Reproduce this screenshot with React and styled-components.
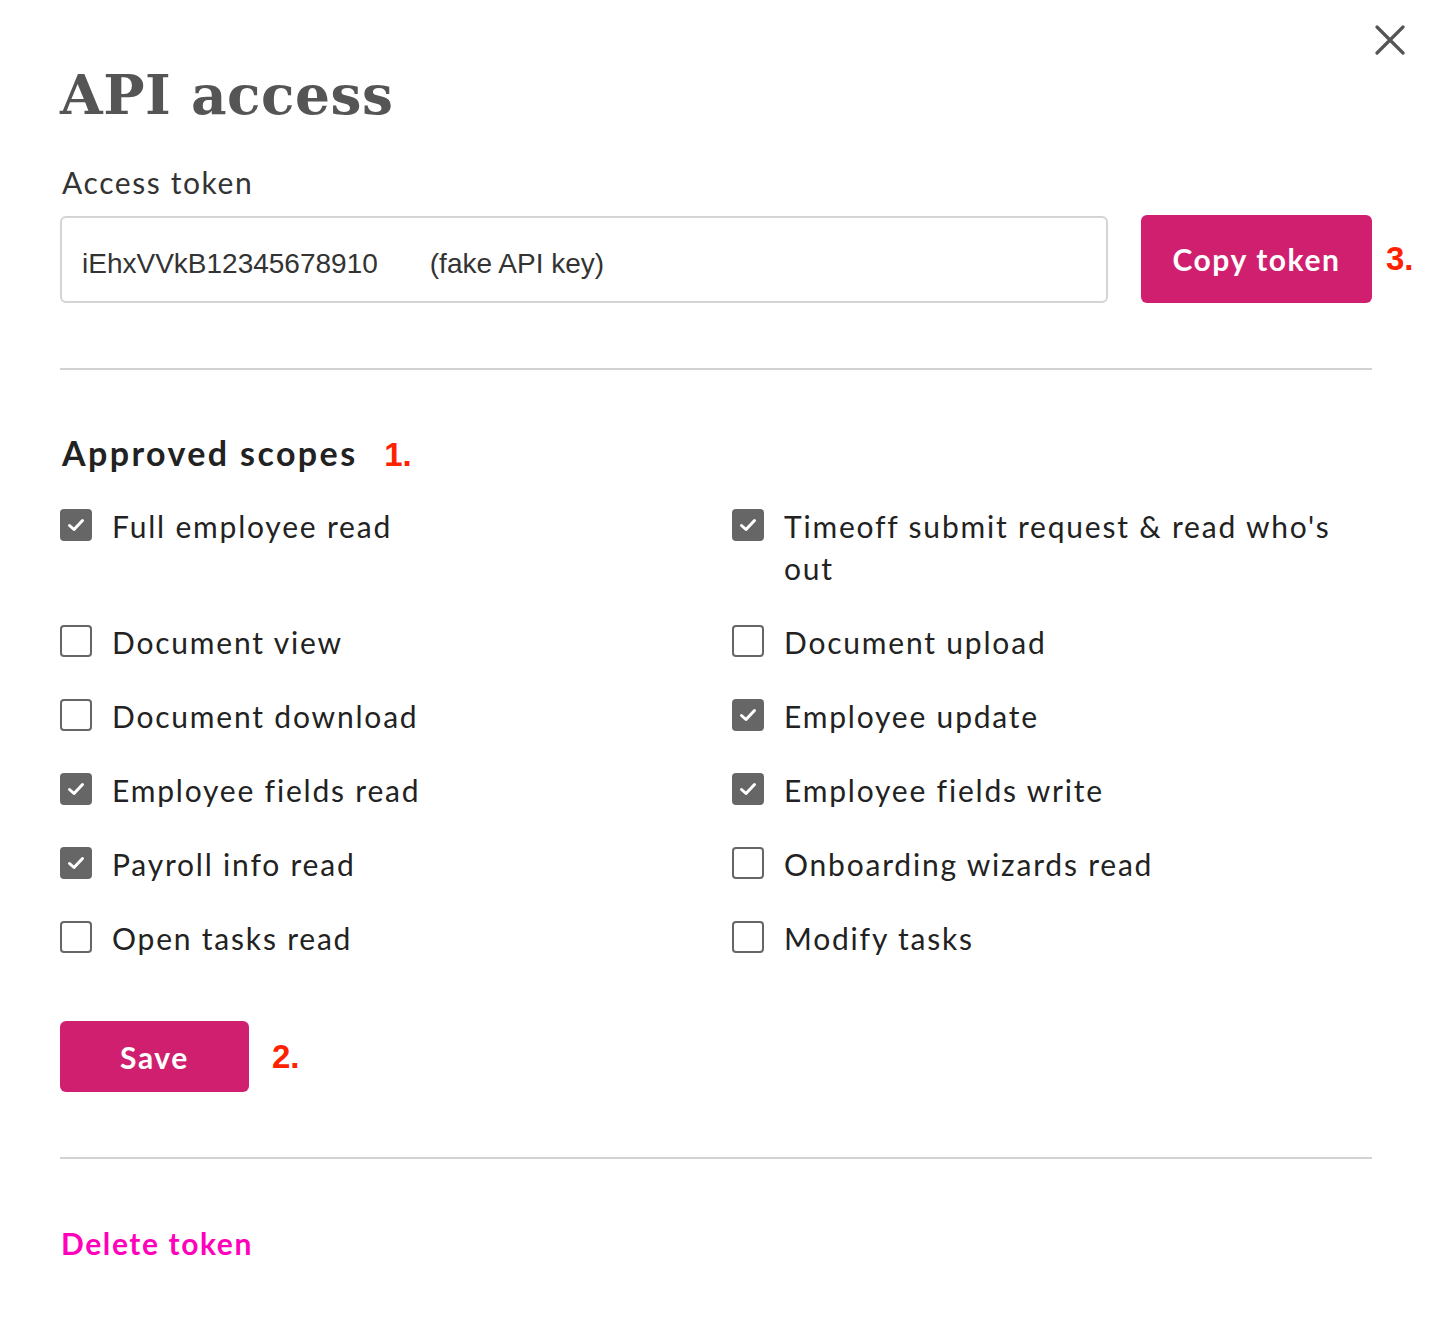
import React, { useState } from "react";
import styled, { createGlobalStyle } from "styled-components";

const GlobalStyle = createGlobalStyle`
  html, body {
    margin: 0;
    padding: 0;
    background: #ffffff;
  }
  body {
    font-family: Lato, "Open Sans", sans-serif;
    color: #222;
  }
`;

const scopes = [
  ["Full employee read", true],
  ["Timeoff submit request & read who's out", true],
  ["Document view", false],
  ["Document upload", false],
  ["Document download", false],
  ["Employee update", true],
  ["Employee fields read", true],
  ["Employee fields write", true],
  ["Payroll info read", true],
  ["Onboarding wizards read", false],
  ["Open tasks read", false],
  ["Modify tasks", false],
];

const App = () => {
  const [checked, setChecked] = useState(scopes.map((s) => s[1]));

  const toggle = (i) => {
    const next = [...checked];
    next[i] = !next[i];
    setChecked(next);
  };

  return (
    <>
      <GlobalStyle />
      <Modal>
        <CloseButton aria-label="Close">
          <svg width="30" height="30" viewBox="0 0 30 30">
            <path
              d="M2 2 L28 28 M28 2 L2 28"
              stroke="#555"
              strokeWidth="3.2"
              strokeLinecap="round"
            />
          </svg>
        </CloseButton>
        <Title>API access</Title>

        <Label>Access token</Label>
        <TokenRow>
          <TokenField>
            <span>iEhxVVkB12345678910</span>
            <span>(fake API key)</span>
          </TokenField>
          <PinkButton $wide>Copy token</PinkButton>
          <Marker>3.</Marker>
        </TokenRow>

        <Divider />

        <SectionTitle>
          Approved scopes <Marker>1.</Marker>
        </SectionTitle>
        <ScopeGrid>
          {scopes.map(([name], i) => (
            <Scope key={name} onClick={() => toggle(i)}>
              <Box $on={checked[i]}>
                {checked[i] && (
                  <svg width="18" height="14" viewBox="0 0 18 14">
                    <path
                      d="M2.5 7.5 L7 11.5 L15.5 2.5"
                      stroke="#fff"
                      strokeWidth="3"
                      fill="none"
                      strokeLinecap="round"
                      strokeLinejoin="round"
                    />
                  </svg>
                )}
              </Box>
              <ScopeName>{name}</ScopeName>
            </Scope>
          ))}
        </ScopeGrid>

        <SaveRow>
          <PinkButton>Save</PinkButton>
          <Marker>2.</Marker>
        </SaveRow>

        <Divider />

        <DeleteLink href="#">Delete token</DeleteLink>
      </Modal>
    </>
  );
};

export default App;

const Modal = styled.div`
  position: relative;
  width: 1431px;
  height: 1325px;
  box-sizing: border-box;
  padding: 60px 59px 0 60px;
  display: flex;
  flex-direction: column;
`;

const CloseButton = styled.button`
  position: absolute;
  top: 25px;
  right: 26px;
  width: 30px;
  height: 30px;
  padding: 0;
  border: none;
  background: none;
  cursor: pointer;
  display: flex;
`;

const Title = styled.h1`
  margin: 0;
  font-family: "DejaVu Serif", "Liberation Serif", serif;
  font-weight: 700;
  font-size: 55px;
  line-height: 70px;
  color: #555;
  letter-spacing: 0.5px;
`;

const Label = styled.div`
  margin-top: 35px;
  font-size: 30px;
  line-height: 34px;
  color: #333;
  letter-spacing: 1.6px;
  padding-left: 2px;
`;

const Marker = styled.span`
  margin-left: 14px;
  color: #ff2200;
  font-family: "Liberation Sans", Arial, sans-serif;
  font-weight: 700;
  font-size: 33px;
`;

const TokenRow = styled.div`
  margin: 16px -46px 65px 0;
  display: flex;
  align-items: center;

  ${Marker} {
    width: 32px;
  }
`;

const TokenField = styled.div`
  flex: 1;
  height: 87px;
  box-sizing: border-box;
  border: 2px solid #d4d4d4;
  border-radius: 6px;
  display: flex;
  align-items: center;
  gap: 52px;
  padding: 10px 0 0 20px;
  font-family: "Liberation Sans", Arial, sans-serif;
  font-size: 28px;
  color: #333;
`;

const PinkButton = styled.button`
  margin-left: ${(p) => (p.$wide ? "33px" : "0")};
  width: ${(p) => (p.$wide ? "231px" : "189px")};
  height: ${(p) => (p.$wide ? "88px" : "71px")};
  background: #d01f6e;
  border: none;
  border-radius: 6px;
  color: #fff;
  font-family: Lato, "Open Sans", sans-serif;
  font-weight: 700;
  font-size: 30px;
  letter-spacing: 1.6px;
  cursor: pointer;
`;

const Divider = styled.hr`
  margin: 0;
  border: none;
  height: 2px;
  background: #d2d2d2;
`;

const SectionTitle = styled.h2`
  margin: 63px 0 0 2px;
  font-size: 34px;
  line-height: 40px;
  font-weight: 700;
  color: #222;
  letter-spacing: 2.4px;

  ${Marker} {
    margin-left: 16px;
    letter-spacing: 0;
  }
`;

const ScopeGrid = styled.div`
  margin-top: 30px;
  display: grid;
  grid-template-columns: 672px 1fr;
  row-gap: 32px;
`;

const Scope = styled.label`
  display: flex;
  align-items: flex-start;
  cursor: pointer;
`;

const Box = styled.span`
  flex: none;
  width: 32px;
  height: 32px;
  box-sizing: border-box;
  margin-top: 4px;
  border-radius: 4px;
  border: 2px solid #666;
  background: ${(p) => (p.$on ? "#666" : "#fff")};
  display: flex;
  align-items: center;
  justify-content: center;
`;

const ScopeName = styled.span`
  margin-left: 20px;
  font-size: 30px;
  line-height: 42px;
  color: #222;
  letter-spacing: 1.8px;
  max-width: 560px;
`;

const SaveRow = styled.div`
  margin: 62px 0 65px;
  display: flex;
  align-items: center;

  ${Marker} {
    margin-left: 23px;
  }
`;

const DeleteLink = styled.a`
  margin-top: 66px;
  align-self: flex-start;
  font-size: 30px;
  font-weight: 700;
  color: #ff00bb;
  text-decoration: none;
  letter-spacing: 1.6px;
  padding-left: 1px;
`;
